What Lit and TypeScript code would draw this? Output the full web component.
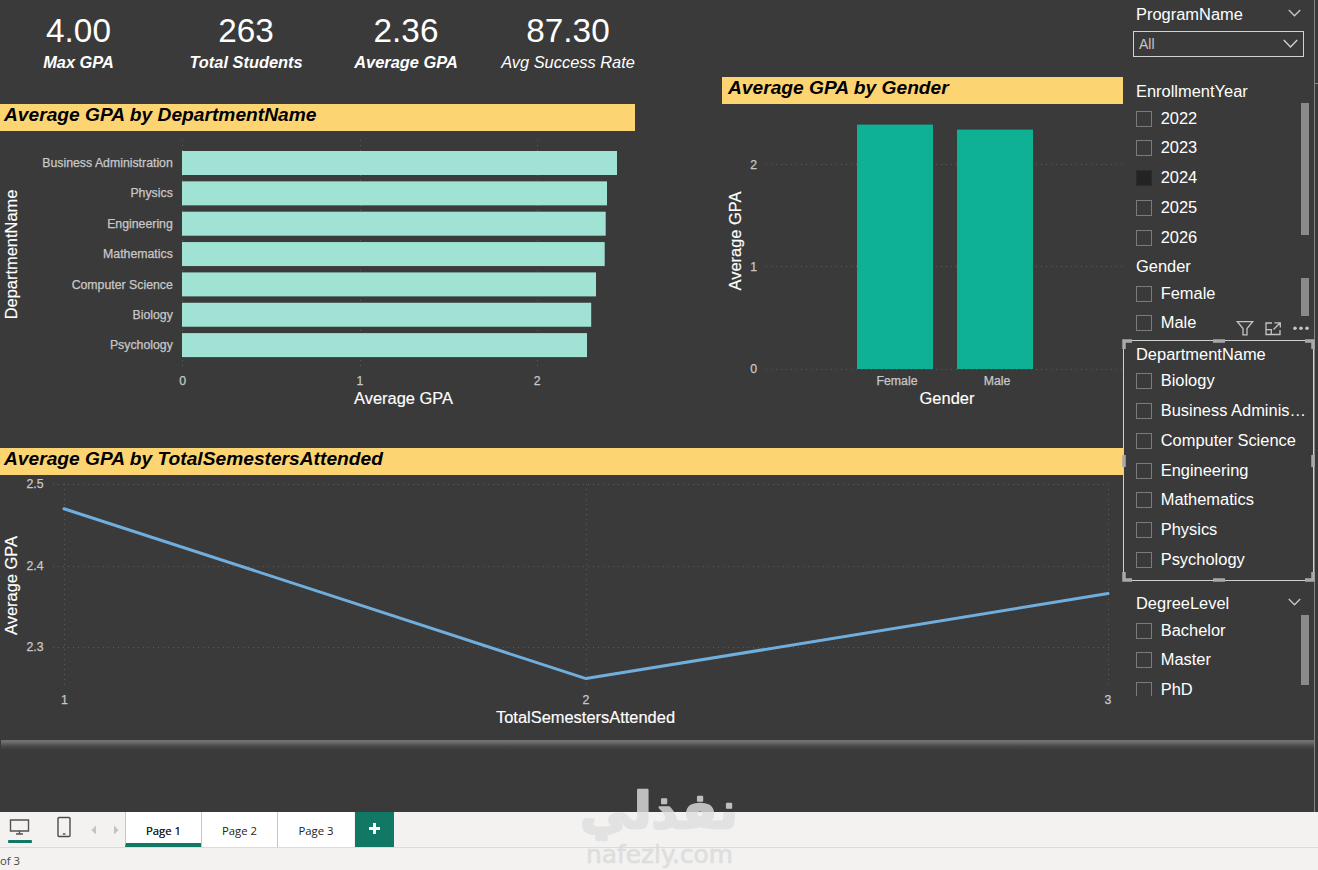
import { LitElement, html, svg, css } from "lit";
import { customElement, property } from "lit/decorators.js";

const cards = [
  { value: "4.00", label: "Max GPA", width: 157, bold: true },
  { value: "263", label: "Total Students", width: 178, bold: true },
  { value: "2.36", label: "Average GPA", width: 142, bold: true },
  { value: "87.30", label: "Avg Success Rate", width: 182, bold: false },
];

const departments = [
  { name: "Business Administration", end: 617 },
  { name: "Physics", end: 607 },
  { name: "Engineering", end: 605.7 },
  { name: "Mathematics", end: 604.7 },
  { name: "Computer Science", end: 596 },
  { name: "Biology", end: 591.2 },
  { name: "Psychology", end: 587 },
];

const chartText = css`
  svg { display: block; }
  text { font-family: "Liberation Sans", Arial, sans-serif; }
  .tick { font-size: 12.3px; fill: #c8c8c8; stroke: #c8c8c8; stroke-width: .25; }
  .axis { font-size: 16.45px; fill: #fff; stroke: #fff; stroke-width: .15; }
  .grid { stroke: #5c5c5c; stroke-width: 1; stroke-dasharray: 1 4; fill: none; }
  .end { text-anchor: end; }
  .mid { text-anchor: middle; }
  .banner {
    box-sizing: border-box;
    height: 27px;
    background: #fdd472;
    color: #000;
    font: italic bold 19.2px/21px "Liberation Sans", Arial, sans-serif;
    padding-left: 4px;
    white-space: nowrap;
  }
`;

@customElement("department-chart")
export class DepartmentChart extends LitElement {
  static styles = [chartText, css`
    :host { display: block; width: 722px; }
    .banner { width: 635px; }
    .bar { fill: #a0e2d3; }
  `];
  render() {
    return html`
      <div class="banner">Average GPA by DepartmentName</div>
      <svg width="722" height="317" viewBox="0 131 722 317">
        ${[182.5, 360.5, 537.5].map((x) => svg`<path class="grid" d="M${x} 140V370" />`)}
        ${departments.map((d, i) => svg`
          <rect class="bar" x="182" y=${151 + i * 30.35} width=${d.end - 182} height="24" />
          <text class="tick end" x="172.8" y=${167.1 + i * 30.35}>${d.name}</text>`)}
        ${[0, 1, 2].map((n) => svg`<text class="tick mid" x=${182.7 + n * 177.2} y="385">${n}</text>`)}
        <text class="axis mid" x="403.5" y="404">Average GPA</text>
        <text class="axis mid" transform="translate(17.3 254.5) rotate(-90)">DepartmentName</text>
      </svg>`;
  }
}

@customElement("gender-chart")
export class GenderChart extends LitElement {
  static styles = [chartText, css`
    :host { display: block; width: 401px; }
    .banner { padding-left: 6px; }
    .bar { fill: #0eb194; }
  `];
  render() {
    return html`
      <div class="banner">Average GPA by Gender</div>
      <svg width="401" height="344" viewBox="722 104 401 344">
        ${[164.5, 266.5, 369.5].map((y, i) => svg`
          <path class="grid" d="M766 ${y}H1123" />
          <text class="tick end" x="757" y=${y + [4.2, 4.2, 3.5][i]}>${2 - i}</text>`)}
        <rect class="bar" x="857" y="124.6" width="76" height="244.4" />
        <rect class="bar" x="957" y="129.6" width="76" height="239.4" />
        <text class="tick mid" x="897" y="385">Female</text>
        <text class="tick mid" x="997" y="385">Male</text>
        <text class="axis mid" x="947" y="404">Gender</text>
        <text class="axis mid" transform="translate(741.2 241) rotate(-90)">Average GPA</text>
      </svg>`;
  }
}

@customElement("semester-chart")
export class SemesterChart extends LitElement {
  static styles = [chartText, css`
    :host { display: block; width: 1123px; }
    .series { fill: none; stroke: #70aede; stroke-width: 3; stroke-linecap: round; stroke-linejoin: round; }
  `];
  render() {
    return html`
      <div class="banner">Average GPA by TotalSemestersAttended</div>
      <svg width="1123" height="265" viewBox="0 475 1123 265">
        ${[484.5, 566.5, 647.5].map((y, i) => svg`
          <path class="grid" d="M53 ${y}H1109" />
          <text class="tick end" x="43.5" y=${y + 3.9}>${["2.5", "2.4", "2.3"][i]}</text>`)}
        ${[64.5, 586, 1108].map((x, i) => svg`
          <path class="grid" d="M${Math.floor(x) + 0.5} 484V688" />
          <text class="tick mid" x=${x} y="704">${i + 1}</text>`)}
        <path class="series" d="M64 508.7L586 678.6L1108 593.6" />
        <text class="axis mid" x="585.5" y="723">TotalSemestersAttended</text>
        <text class="axis mid" transform="translate(17.3 585.5) rotate(-90)">Average GPA</text>
      </svg>`;
  }
}

@customElement("slicer-list")
export class SlicerList extends LitElement {
  @property() heading = "";
  @property({ attribute: false }) items: string[] = [];
  @property() checked = "";
  @property({ type: Boolean }) chevron = false;

  static styles = css`
    :host {
      display: block;
      box-sizing: border-box;
      overflow: hidden;
      color: #fff;
      font: 16.45px/20px "Liberation Sans", Arial, sans-serif;
      padding-left: 13px;
    }
    .head { display: flex; justify-content: space-between; padding-right: 13px; height: 20px; }
    .chev { margin-top: 5px; }
    .rows { padding-top: 2.65px; }
    .row { display: flex; align-items: center; height: 29.83px; gap: 8.7px; }
    .box { box-sizing: border-box; flex: none; width: 16px; height: 16px; border: 1px solid #7b7b7b; }
    .on { background: #232323; border-color: #2c2c2c; }
    .name { width: 147px; overflow: hidden; text-overflow: ellipsis; white-space: nowrap; margin-top: -2px; }
  `;
  render() {
    return html`
      <div class="head"><span>${this.heading}</span>
        ${this.chevron ? html`<svg class="chev" width="13" height="9" viewBox="0 0 13 9" fill="none" stroke="#c8c8c8" stroke-width="1.3"><path d="M.8 1L6.5 6.8L12.2 1" /></svg>` : ""}
      </div>
      <div class="rows">
        ${this.items.map((t) => html`<div class="row"><span class="box ${t === this.checked ? "on" : ""}"></span><span class="name">${t}</span></div>`)}
      </div>`;
  }
}

@customElement("app-root")
export class AppRoot extends LitElement {
  static styles = css`
    :host {
      display: flex;
      flex-direction: column;
      position: relative;
      width: 1318px;
      height: 870px;
      overflow: hidden;
      background: #3a3a3a;
      font-family: "Liberation Sans", Arial, sans-serif;
    }
    .stage { display: flex; height: 812px; }
    .page { width: 1314px; }
    .report { display: flex; height: 740px; }
    .charts { width: 1123px; }
    .upper { display: flex; height: 448px; }
    .gender { padding-top: 77px; }
    .cards { display: flex; height: 104px; color: #fff; text-align: center; }
    .card { box-sizing: border-box; padding-top: 11px; white-space: nowrap; }
    .value { font-size: 33.3px; line-height: 40px; }
    .label { font-size: 16.4px; line-height: 20px; margin-top: 1px; font-style: italic; }
    .bold { font-weight: bold; }
    .slicers { width: 191px; }
    .program { box-sizing: border-box; height: 81px; padding-top: 4px; color: #fff; }
    .phead { display: flex; justify-content: space-between; padding: 0 13px; font-size: 16.45px; line-height: 20px; }
    .phead svg { margin-top: 5px; }
    .select {
      box-sizing: border-box;
      display: flex;
      align-items: center;
      justify-content: space-between;
      width: 171px;
      height: 26px;
      margin: 7px 0 0 10px;
      padding: 0 5px;
      border: 1px solid #d2d2d2;
      font-size: 14px;
      color: #c4c4c4;
    }
    .holder { position: relative; }
    .year { height: 175px; }
    .sex { height: 84px; }
    .dept { height: 241px; padding-top: 3.55px; box-sizing: border-box; }
    .degree { height: 115px; padding-top: 12px; box-sizing: border-box; overflow: hidden; }
    .thumb { position: absolute; left: 178px; width: 8px; background: #8a8a8a; }
    .t-year { top: 22px; height: 132px; }
    .t-sex { top: 22px; height: 38px; }
    .t-degree { top: 33.5px; height: 70px; }
    .tools { position: absolute; left: 112px; top: -21px; }
    .frame { position: absolute; left: -1px; top: -1px; }
    .shadow { height: 10px; margin-left: 1px; background: linear-gradient(#747474, #6a6a6a 25%, #494949 60%, #3a3a3a); }
    .edge { width: 1px; background: #858585; }
    .mark { width: 3px; height: 1px; margin-top: 83px; background: #858585; }
    .tabs {
      box-sizing: border-box;
      display: flex;
      height: 36px;
      background: #f3f2f1;
      border-bottom: 1px solid #dcdbda;
      font: 11.3px/35px "Open Sans", "Noto Sans", sans-serif;
      color: #252423;
    }
    .tab { box-sizing: border-box; background: #fff; border-left: 1px solid #c8c6c4; text-align: center; padding-top: 1px; height: 35px; }
    .w1 { width: 76px; }
    .w2 { width: 77px; }
    .active { border-bottom: 4px solid #117865; text-shadow: 0 0 .5px #252423; }
    .add { width: 39px; height: 35px; margin-left: 1px; background: #117865; }
    .status { height: 22px; background: #f3f2f1; color: #484644; font: 11.3px/25px "Open Sans", "Noto Sans", sans-serif; }
    .watermark { position: absolute; left: 570px; top: 780px; opacity: .8; }
    .ar { font: bold 42px "DejaVu Sans", sans-serif; fill: #dfdfdf; stroke: #dfdfdf; stroke-width: 2; stroke-linejoin: round; }
    .la { font: 24px "DejaVu Sans", sans-serif; fill: #dadada; stroke: #dadada; stroke-width: .7; }
  `;

  render() {
    return html`
      <div class="stage">
        <div class="page">
          <div class="report">
            <div class="charts">
              <div class="upper">
                <div>
                  <div class="cards">
                    ${cards.map((c) => html`<div class="card" style="width:${c.width}px">
                      <div class="value">${c.value}</div>
                      <div class="label ${c.bold ? "bold" : ""}">${c.label}</div>
                    </div>`)}
                  </div>
                  <department-chart></department-chart>
                </div>
                <div class="gender"><gender-chart></gender-chart></div>
              </div>
              <semester-chart></semester-chart>
            </div>
            ${this.slicers()}
          </div>
          <div class="shadow"></div>
        </div>
        <div class="edge"></div>
        <div class="mark"></div>
      </div>
      <div class="tabs">
        <svg width="125" height="35" viewBox="0 812 125 35" fill="none">
          <path d="M10.5 820H28.5V831H10.5ZM19.5 831V834M16 834H23" stroke="#55524f" stroke-width="1.4" />
          <rect x="8" y="840" width="24" height="3" rx="1" fill="#117865" />
          <rect x="58" y="817.5" width="12" height="19" rx="1" stroke="#4d4b49" stroke-width="1.4" />
          <path d="M62.8 834H65.5" stroke="#4d4b49" stroke-width="1.4" />
          <path d="M96 825.5V834.5L91.5 830ZM114 825.5V834.5L118.500 830Z" fill="#c5c3c1" />
        </svg>
        <div class="tab w1 active">Page 1</div>
        <div class="tab w1">Page 2</div>
        <div class="tab w2">Page 3</div>
        <div class="add">
          <svg width="39" height="35" viewBox="0 0 39 35"><path d="M14 16.500H25M19.500 11V22" stroke="#fff" stroke-width="3" /></svg>
        </div>
      </div>
      <div class="status">of 3</div>
      <svg class="watermark" width="180" height="90" viewBox="570 780 180 90">
        <text class="ar" transform="translate(580 828) scale(1 1.18)" textLength="158" lengthAdjust="spacingAndGlyphs">نفذلي</text>
        <text class="la" x="586" y="863" textLength="147" lengthAdjust="spacingAndGlyphs">nafezly.com</text>
      </svg>`;
  }

  slicers() {
    return html`
      <div class="slicers">
        <div class="program">
          <div class="phead"><span>ProgramName</span>
            <svg width="13" height="9" viewBox="0 0 13 9" fill="none" stroke="#c8c8c8" stroke-width="1.3"><path d="M.8 1L6.5 6.8L12.2 1" /></svg>
          </div>
          <div class="select"><span>All</span>
            <svg width="15" height="10" viewBox="0 0 15 10" fill="none" stroke="#d0d0d0" stroke-width="1.4"><path d="M.8 1L7.500 8L14.200 1" /></svg>
          </div>
        </div>
        <div class="holder year">
          <slicer-list heading="EnrollmentYear" checked="2024" .items=${["2022", "2023", "2024", "2025", "2026"]}></slicer-list>
          <div class="thumb t-year"></div>
        </div>
        <div class="holder sex">
          <slicer-list heading="Gender" .items=${["Female", "Male"]}></slicer-list>
          <div class="thumb t-sex"></div>
        </div>
        <div class="holder dept">
          <slicer-list heading="DepartmentName" .items=${["Biology", "Business Administration", "Computer Science", "Engineering", "Mathematics", "Physics", "Psychology"]}></slicer-list>
          <svg class="tools" width="76" height="18" viewBox="1235 319 76 18" fill="none" stroke="#c4c4c4" stroke-width="1.3">
            <path d="M1237.300 321.600H1252.700L1247 328.500V334.800H1243V328.500Z" />
            <path d="M1272 323H1266V334.500H1280V330M1274.500 322.800H1280.300V327.500M1280 323L1273.500 329.500M1266 329.700H1271.300V334.500" />
            <g fill="#c4c4c4" stroke="none"><circle cx="1295" cy="328.300" r="1.800" /><circle cx="1301" cy="328.300" r="1.800" /><circle cx="1307" cy="328.300" r="1.800" /></g>
          </svg>
          <svg class="frame" width="193" height="243" viewBox="1122 339 193 243" fill="none">
            <rect x="1123.500" y="340.500" width="190" height="240" stroke="#cfcfcf" />
            <path d="M1124 349V341H1132M1305 341H1313V349M1124 572V580H1132M1305 580H1313V572M1213 341H1225M1213 580H1225M1124 455V467M1313 455V467" stroke="#a9a9a9" stroke-width="3.500" />
          </svg>
        </div>
        <div class="holder degree">
          <slicer-list heading="DegreeLevel" chevron .items=${["Bachelor", "Master", "PhD"]}></slicer-list>
          <div class="thumb t-degree"></div>
        </div>
      </div>`;
  }
}
